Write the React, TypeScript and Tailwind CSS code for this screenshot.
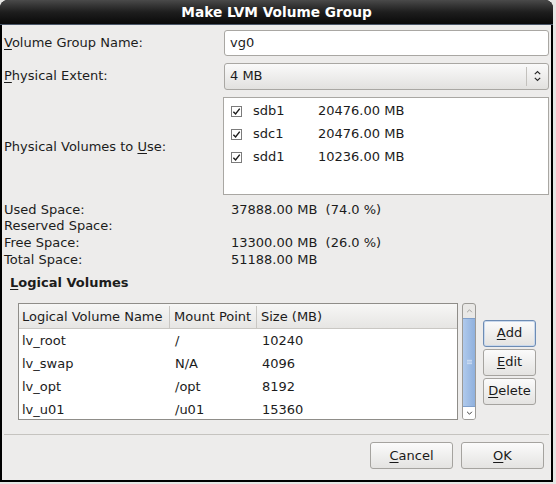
import type { ReactNode } from "react";

const font = { fontFamily: '"DejaVu Sans", "Liberation Sans", sans-serif' };

function U({ children }: { children: ReactNode }) {
  return <span className="underline underline-offset-2">{children}</span>;
}

function Check() {
  return (
    <span className="flex h-[11px] w-[11px] items-center justify-center border border-[#7b7b7b] bg-white">
      <svg viewBox="0 0 10 10" className="h-[9px] w-[9px]">
        <path d="M1.5 5.2 L4 7.8 L8.6 1.8" fill="none" stroke="#1e1e1e" strokeWidth="1.6" />
      </svg>
    </span>
  );
}

function Btn({ children, focus, className }: { children: ReactNode; focus?: boolean; className?: string }) {
  return (
    <div
      className={
        "flex items-center justify-center rounded-[3px] border bg-gradient-to-b from-[#fbfbfb] to-[#e4e3e1] text-[#1a1a1a] " +
        (focus ? "border-[#6d8cb4] shadow-[inset_0_0_0_1px_#c9d8ec] " : "border-[#a5a39f] ") +
        (className ?? "")
      }
    >
      {children}
    </div>
  );
}

const pvs = [
  ["sdb1", "20476.00 MB"],
  ["sdc1", "20476.00 MB"],
  ["sdd1", "10236.00 MB"],
];

const stats = [
  ["Used Space:", "37888.00 MB  (74.0 %)"],
  ["Reserved Space:", ""],
  ["Free Space:", "13300.00 MB  (26.0 %)"],
  ["Total Space:", "51188.00 MB"],
];

const lvs = [
  ["lv_root", "/", "10240"],
  ["lv_swap", "N/A", "4096"],
  ["lv_opt", "/opt", "8192"],
  ["lv_u01", "/u01", "15360"],
];

export default function App() {
  return (
    <div className="h-[484px] w-[556px] bg-[#e6e6e4] text-[13px] text-[#1c1c1c]" style={font}>
      <div className="flex h-[482px] w-[553px] flex-col overflow-hidden rounded-t-[8px] bg-black">
        {/* title bar */}
        <div className="flex h-[25px] shrink-0 items-center justify-center border-b border-[#4a5668] bg-gradient-to-b from-[#4a4a4a] via-[#1e1e1e] to-[#0a0a0a] pt-[1px] text-[13.7px] font-bold text-white">
          Make LVM Volume Group
        </div>

        <div className="mx-[2px] mb-[2px] flex flex-1 flex-col bg-[#edeceb] px-[2px]">
          {/* form rows */}
          <div className="mt-[4px] flex h-[26px] items-center pt-[1px]">
            <div className="w-[220px]">
              <U>V</U>olume Group Name:
            </div>
            <div className="flex h-[26px] w-[325px] items-center rounded-[3px] border border-[#a9a7a3] bg-white px-[5px]">
              vg0
            </div>
          </div>

          <div className="mt-[7px] flex h-[27px] items-center pt-[1px]">
            <div className="w-[220px]">
              <U>P</U>hysical Extent:
            </div>
            <div className="flex h-[27px] w-[325px] items-center rounded-[3px] border border-[#a9a7a3] bg-gradient-to-b from-[#fafafa] to-[#e2e1df]">
              <span className="flex-1 px-[5px]">4 MB</span>
              <span className="h-[19px] w-px bg-[#c3c1bd]" />
              <svg viewBox="0 0 10 14" className="mx-[6px] h-[14px] w-[9px]">
                <path d="M2 5 L5 2 L8 5 M2 9 L5 12 L8 9" fill="none" stroke="#2a2a2a" strokeWidth="1.3" />
              </svg>
            </div>
          </div>

          <div className="mt-[8px] flex h-[98px] items-center">
            <div className="w-[219px] pt-[2px]">
              Physical Volumes to <U>U</U>se:
            </div>
            <div className="flex h-[98px] w-[326px] flex-col border border-[#a9a7a3] bg-white pt-[1px]">
              {pvs.map(([n, s]) => (
                <div key={n} className="flex h-[23px] items-center pt-[1px]">
                  <span className="ml-[7px]">
                    <Check />
                  </span>
                  <span className="ml-[11px] w-[65px]">{n}</span>
                  <span>{s}</span>
                </div>
              ))}
            </div>
          </div>

          {/* totals */}
          <div className="mt-[6px] flex flex-col">
            {stats.map(([l, v]) => (
              <div key={l} className="flex h-[16.67px] items-center">
                <span className="w-[227px]">{l}</span>
                <span className="whitespace-pre">{v}</span>
              </div>
            ))}
          </div>

          {/* logical volumes */}
          <div className="mt-[7px] flex h-[17px] items-center pl-[6px] font-bold">
            <U>L</U>ogical Volumes
          </div>

          <div className="mt-[11px] flex h-[117px] pl-[14px]">
            <div className="flex w-[440px] flex-col border border-[#8f8d89] bg-white">
              <div className="flex h-[25px] shrink-0 items-center border-b border-[#c9c7c3] bg-gradient-to-b from-[#f7f7f6] to-[#e6e5e3] pt-[2px]">
                <span className="flex h-full w-[151px] items-center border-r border-[#c9c7c3] pl-[3px]">Logical Volume Name</span>
                <span className="flex h-full w-[87px] items-center border-r border-[#c9c7c3] pl-[4px]">Mount Point</span>
                <span className="flex h-full flex-1 items-center pl-[4px]">Size (MB)</span>
              </div>
              {lvs.map(([n, m, s]) => (
                <div key={n} className="flex h-[23px] shrink-0 items-center pt-[2px]">
                  <span className="w-[152px] pl-[3px]">{n}</span>
                  <span className="w-[87px] pl-[4px]">{m}</span>
                  <span className="pl-[4px]">{s}</span>
                </div>
              ))}
            </div>

            <div className="ml-[4px] flex w-[14px] flex-col overflow-hidden rounded-[3px] border border-[#9c9a96] bg-[#e9e8e6]">
              <div className="flex h-[14px] items-center justify-center">
                <svg viewBox="0 0 8 5" className="h-[4px] w-[7px]">
                  <path d="M1 4 L4 1 L7 4" fill="none" stroke="#9a9895" strokeWidth="1.1" />
                </svg>
              </div>
              <div className="flex flex-1 items-center justify-center border-y border-[#7f9fcb] bg-gradient-to-r from-[#b0caec] to-[#8fb0dd]">
                <svg viewBox="0 0 6 6" className="h-[6px] w-[5px]">
                  <path d="M0 1 H6 M0 3 H6 M0 5 H6" stroke="#e9f0fa" strokeWidth="0.8" />
                </svg>
              </div>
              <div className="flex h-[12px] items-center justify-center bg-white">
                <svg viewBox="0 0 8 5" className="h-[4px] w-[7px]">
                  <path d="M1 1 L4 4 L7 1" fill="none" stroke="#333" strokeWidth="1.2" />
                </svg>
              </div>
            </div>

            <div className="ml-[7px] mt-[17px] flex flex-col gap-[2px]">
              <Btn focus className="h-[27px] w-[53px]">
                <U>A</U>dd
              </Btn>
              <Btn className="h-[27px] w-[53px]">
                <U>E</U>dit
              </Btn>
              <Btn className="h-[27px] w-[53px]">
                <U>D</U>elete
              </Btn>
            </div>
          </div>

          {/* separator */}
          <div className="mt-[14px] h-[2px] border-t border-[#c5c3bf] border-b-white" />

          <div className="mt-[6px] flex justify-end gap-[8px] pr-[5px]">
            <Btn className="h-[27px] w-[83px] pt-[1px]">
              <U>C</U>ancel
            </Btn>
            <Btn className="h-[27px] w-[83px] pt-[1px]">
              <U>O</U>K
            </Btn>
          </div>
        </div>
      </div>
    </div>
  );
}
